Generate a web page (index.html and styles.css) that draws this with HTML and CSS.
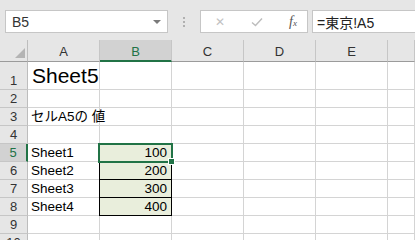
FILE: index.html
```html
<!DOCTYPE html>
<html lang="ja">
<head>
    <meta charset="UTF-8">
    <title>Sheet5</title>
    <link rel="stylesheet" href="styles.css">
</head>
<body>
    <div class="app">
        <div class="formula-bar">
            <div class="name-box">
                <span>B5</span>
                <span class="drop"></span>
            </div>
            <div class="grip"><i></i><i></i><i></i></div>
            <div class="fx-buttons">
                <span class="btn-cancel">&#x2715;</span>
                <svg class="btn-ok" width="12" height="10" viewBox="0 0 12 10"><path d="M1 5.5 L4.5 8.5 L11 1.5" fill="none" stroke="#bdbdbd" stroke-width="1.4"/></svg>
                <span class="fx">f<sub>x</sub></span>
            </div>
            <div class="formula-input">=東京!A5</div>
        </div>

        <div class="sheet">
            <div class="corner"><span class="tri"></span></div>
            <div class="col-head">A</div>
            <div class="col-head active">B</div>
            <div class="col-head">C</div>
            <div class="col-head">D</div>
            <div class="col-head">E</div>
            <div class="col-head"></div>

            <div class="row-head tall">1</div>
            <div class="cell tall title">Sheet5</div>
            <div class="cell tall"></div><div class="cell tall"></div><div class="cell tall"></div><div class="cell tall"></div><div class="cell tall"></div>

            <div class="row-head">2</div>
            <div class="cell"></div><div class="cell"></div><div class="cell"></div><div class="cell"></div><div class="cell"></div><div class="cell"></div>

            <div class="row-head">3</div>
            <div class="cell">セルA5の 値</div>
            <div class="cell"></div><div class="cell"></div><div class="cell"></div><div class="cell"></div><div class="cell"></div>

            <div class="row-head">4</div>
            <div class="cell"></div><div class="cell"></div><div class="cell"></div><div class="cell"></div><div class="cell"></div><div class="cell"></div>

            <div class="row-head active">5</div>
            <div class="cell">Sheet1</div>
            <div class="cell num boxed selected">100<span class="handle"></span></div>
            <div class="cell"></div><div class="cell"></div><div class="cell"></div><div class="cell"></div>

            <div class="row-head">6</div>
            <div class="cell">Sheet2</div>
            <div class="cell num boxed">200</div>
            <div class="cell"></div><div class="cell"></div><div class="cell"></div><div class="cell"></div>

            <div class="row-head">7</div>
            <div class="cell">Sheet3</div>
            <div class="cell num boxed">300</div>
            <div class="cell"></div><div class="cell"></div><div class="cell"></div><div class="cell"></div>

            <div class="row-head">8</div>
            <div class="cell">Sheet4</div>
            <div class="cell num boxed">400</div>
            <div class="cell"></div><div class="cell"></div><div class="cell"></div><div class="cell"></div>

            <div class="row-head">9</div>
            <div class="cell"></div><div class="cell"></div><div class="cell"></div><div class="cell"></div><div class="cell"></div><div class="cell"></div>

            <div class="row-head">10</div>
            <div class="cell"></div><div class="cell"></div><div class="cell"></div><div class="cell"></div><div class="cell"></div><div class="cell"></div>
        </div>
    </div>
</body>
</html>
```

FILE: styles.css
```css
body {
    margin: 0;
    font-family: 'Liberation Sans', 'Noto Sans CJK JP', sans-serif;
    background: #fff;
    color: #000;
    overflow: hidden;
}

.app {
    width: 415px;
    height: 240px;
    overflow: hidden;
}

/* formula bar */
.formula-bar {
    height: 40px;
    box-sizing: border-box;
    padding: 10px 0 7px 5px;
    background: #e6e6e6;
    display: flex;
    align-items: stretch;
}

.name-box {
    width: 163px;
    box-sizing: border-box;
    background: #fff;
    border: 1px solid #c6c6c6;
    display: flex;
    align-items: center;
    justify-content: space-between;
    padding: 0 6px 0 6px;
    font-size: 14px;
    color: #333;
}

.name-box .drop {
    width: 0;
    height: 0;
    border-left: 4px solid transparent;
    border-right: 4px solid transparent;
    border-top: 4px solid #7a7a7a;
}

.grip {
    width: 32px;
    display: flex;
    flex-direction: column;
    align-items: center;
    justify-content: center;
    gap: 2px;
}

.grip i {
    width: 2px;
    height: 2px;
    background: #b0b0b0;
}

.fx-buttons {
    width: 108px;
    box-sizing: border-box;
    background: #fff;
    border: 1px solid #c6c6c6;
    display: flex;
    align-items: center;
    padding: 0 10px 0 14px;
    justify-content: space-between;
}

.btn-cancel {
    color: #c2c2c2;
    font-size: 12px;
}

.fx {
    font-family: 'Liberation Serif', serif;
    font-style: italic;
    font-size: 14px;
    color: #555;
}

.fx sub {
    font-size: 9px;
    vertical-align: 0;
}

.formula-input {
    flex: 1;
    margin-left: 4px;
    background: #fff;
    border: 1px solid #c6c6c6;
    border-right: none;
    display: flex;
    align-items: center;
    padding-left: 4px;
    font-size: 14px;
    color: #222;
}

/* grid */
.sheet {
    display: grid;
    grid-template-columns: 28px repeat(5, 72px) 1fr;
    grid-template-rows: 22px 28px repeat(9, 18px);
}

.sheet > div {
    box-sizing: border-box;
}

.corner {
    background: #e6e6e6;
    border-right: 1px solid #bdbdbd;
    border-bottom: 1px solid #9b9b9b;
    position: relative;
}

.corner .tri {
    position: absolute;
    right: 2px;
    bottom: 3px;
    width: 0;
    height: 0;
    border-left: 10px solid transparent;
    border-bottom: 10px solid #b4b4b4;
}

.col-head {
    background: #e6e6e6;
    border-right: 1px solid #c6c6c6;
    border-bottom: 1px solid #9b9b9b;
    display: flex;
    align-items: center;
    justify-content: center;
    font-size: 13px;
    color: #333;
    padding-top: 2px;
}

.col-head.active {
    background: #d2d2d2;
    color: #217346;
    border-bottom: 2px solid #217346;
}

.row-head {
    background: #e6e6e6;
    border-right: 1px solid #bdbdbd;
    border-bottom: 1px solid #c6c6c6;
    display: flex;
    align-items: flex-end;
    justify-content: center;
    font-size: 13px;
    color: #333;
    line-height: 17px;
}

.row-head.active {
    background: #d2d2d2;
    color: #217346;
    border-right: 2px solid #217346;
}

.cell {
    border-right: 1px solid #d4d4d4;
    border-bottom: 1px solid #d4d4d4;
    display: flex;
    align-items: flex-end;
    padding: 0 2px 0 3px;
    font-size: 13.5px;
    line-height: 17px;
    white-space: nowrap;
    position: relative;
}

.cell.title {
    font-size: 21px;
    line-height: 26px;
    padding-left: 4px;
    overflow: visible;
}

.cell.num {
    justify-content: flex-end;
    padding-right: 4px;
}

.cell.boxed {
    background: #e9eedc;
    border: 1px solid #000;
    border-top: none;
    margin-left: -1px;
}

.cell.selected {
    outline: 2px solid #217346;
    outline-offset: -1px;
    z-index: 2;
}

.cell .handle {
    position: absolute;
    right: -4px;
    bottom: -4px;
    width: 5px;
    height: 5px;
    background: #217346;
    border: 1px solid #fff;
}
```
